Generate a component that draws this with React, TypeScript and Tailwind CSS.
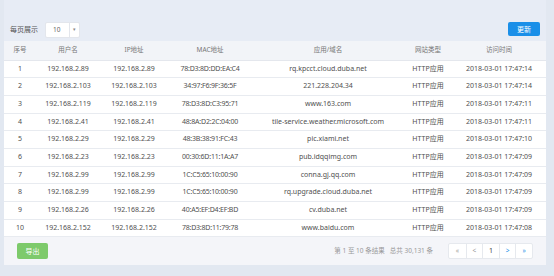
import React from 'react';

interface Row {
  user: string;
  ip: string;
  mac: string;
  domain: string;
  type: string;
  time: string;
}

const rows: Row[] = [
  { user: '192.168.2.89', ip: '192.168.2.89', mac: '78:D3:8D:DD:EA:C4', domain: 'rq.kpcct.cloud.duba.net', type: 'HTTP应用', time: '2018-03-01 17:47:14' },
  { user: '192.168.2.103', ip: '192.168.2.103', mac: '34:97:F6:9F:36:5F', domain: '221.228.204.34', type: 'HTTP应用', time: '2018-03-01 17:47:14' },
  { user: '192.168.2.119', ip: '192.168.2.119', mac: '78:D3:8D:C3:95:71', domain: 'www.163.com', type: 'HTTP应用', time: '2018-03-01 17:47:11' },
  { user: '192.168.2.41', ip: '192.168.2.41', mac: '48:8A:D2:2C:04:00', domain: 'tile-service.weather.microsoft.com', type: 'HTTP应用', time: '2018-03-01 17:47:11' },
  { user: '192.168.2.29', ip: '192.168.2.29', mac: '48:3B:38:91:FC:43', domain: 'pic.xiami.net', type: 'HTTP应用', time: '2018-03-01 17:47:10' },
  { user: '192.168.2.23', ip: '192.168.2.23', mac: '00:30:6D:11:1A:A7', domain: 'pub.idqqimg.com', type: 'HTTP应用', time: '2018-03-01 17:47:09' },
  { user: '192.168.2.99', ip: '192.168.2.99', mac: '1C:C5:65:10:00:90', domain: 'conna.gj.qq.com', type: 'HTTP应用', time: '2018-03-01 17:47:09' },
  { user: '192.168.2.99', ip: '192.168.2.99', mac: '1C:C5:65:10:00:90', domain: 'rq.upgrade.cloud.duba.net', type: 'HTTP应用', time: '2018-03-01 17:47:09' },
  { user: '192.168.2.26', ip: '192.168.2.26', mac: '40:A5:EF:D4:EF:BD', domain: 'cv.duba.net', type: 'HTTP应用', time: '2018-03-01 17:47:09' },
  { user: '192.168.2.152', ip: '192.168.2.152', mac: '78:D3:8D:11:79:78', domain: 'www.baidu.com', type: 'HTTP应用', time: '2018-03-01 17:47:08' },
];

const headers = ['序号', '用户名', 'IP地址', 'MAC地址', '应用/域名', '网站类型', '访问时间'];
const widths = ['w-[32px]', 'w-[64px]', 'w-[68px]', 'w-[84px]', 'w-[152px]', 'w-[48px]', 'w-[94px]'];

export default function App() {
  return (
    <div className="w-[554px] h-[276px] bg-[#e2e8f1] overflow-hidden font-['Noto_Sans','Noto_Sans_CJK_SC',sans-serif]">
      <div className="ml-[4px] w-[542px] h-[265px] bg-[#e7ecf5] flex flex-col">
        {/* toolbar */}
        <div className="h-[41px] flex items-end pb-[3px] px-[6px] justify-between">
          <div className="flex items-center gap-[7px]">
            <span className="text-[7px] text-[#555]">每页展示</span>
            <div className="w-[35px] h-[16px] bg-white border border-[#e3e6ec] rounded-[2px] flex items-center">
              <span className="flex-1 pl-[7px] text-[6.5px] text-[#666]">10</span>
              <span className="w-[10px] h-full border-l border-[#e3e6ec] flex items-center justify-center text-[5px] text-[#888]">▾</span>
            </div>
          </div>
          <button className="w-[32px] h-[14px] mb-[2px] bg-[#1a8fe8] rounded-[2px] text-white text-[7px] leading-none">更新</button>
        </div>

        {/* table */}
        <table className="table-fixed w-full border-collapse text-center">
          <thead>
            <tr className="h-[19px] bg-[#f2f4f8] border-b border-[#e4e7ed]">
              {headers.map((h, i) => (
                <th key={h} className={`${widths[i]} p-0 font-normal text-[6.5px] text-[#777]`}>{h}</th>
              ))}
            </tr>
          </thead>
          <tbody className="bg-white">
            {rows.map((r, i) => (
              <tr key={i} className="h-[17.7px] border-b border-[#e8ebf0] text-[7px] text-[#505050]">
                <td className="p-0">{i + 1}</td>
                <td className="p-0">{r.user}</td>
                <td className="p-0">{r.ip}</td>
                <td className="p-0 tracking-[-0.2px]">{r.mac}</td>
                <td className="p-0 whitespace-nowrap overflow-hidden">{r.domain}</td>
                <td className="p-0">{r.type}</td>
                <td className="p-0">{r.time}</td>
              </tr>
            ))}
          </tbody>
        </table>

        {/* footer */}
        <div className="flex-1 bg-[#f4f5f9] flex items-center justify-between pl-[13px] pr-[13px]">
          <button className="w-[31px] h-[16px] bg-[#7dca6b] rounded-[2px] text-white text-[7px] leading-none">导出</button>
          <div className="flex items-center gap-[15px]">
            <span className="text-[6.5px] text-[#999] whitespace-pre">第 1 至 10 条结果   总共 30,131 条</span>
            <div className="flex h-[16px] bg-white border border-[#e6e9ee] rounded-[2px]">
              {['«', '<', '1', '>', '»'].map((p, i) => (
                <span
                  key={i}
                  className={`w-[16.6px] flex items-center justify-center text-[6.5px] ${i > 0 ? 'border-l border-[#e6e9ee]' : ''} ${i === 2 ? 'text-[#444] text-[7px]' : i > 2 ? 'text-[#1a8fe8]' : 'text-[#999]'}`}
                >
                  {p}
                </span>
              ))}
            </div>
          </div>
        </div>
      </div>
    </div>
  );
}
